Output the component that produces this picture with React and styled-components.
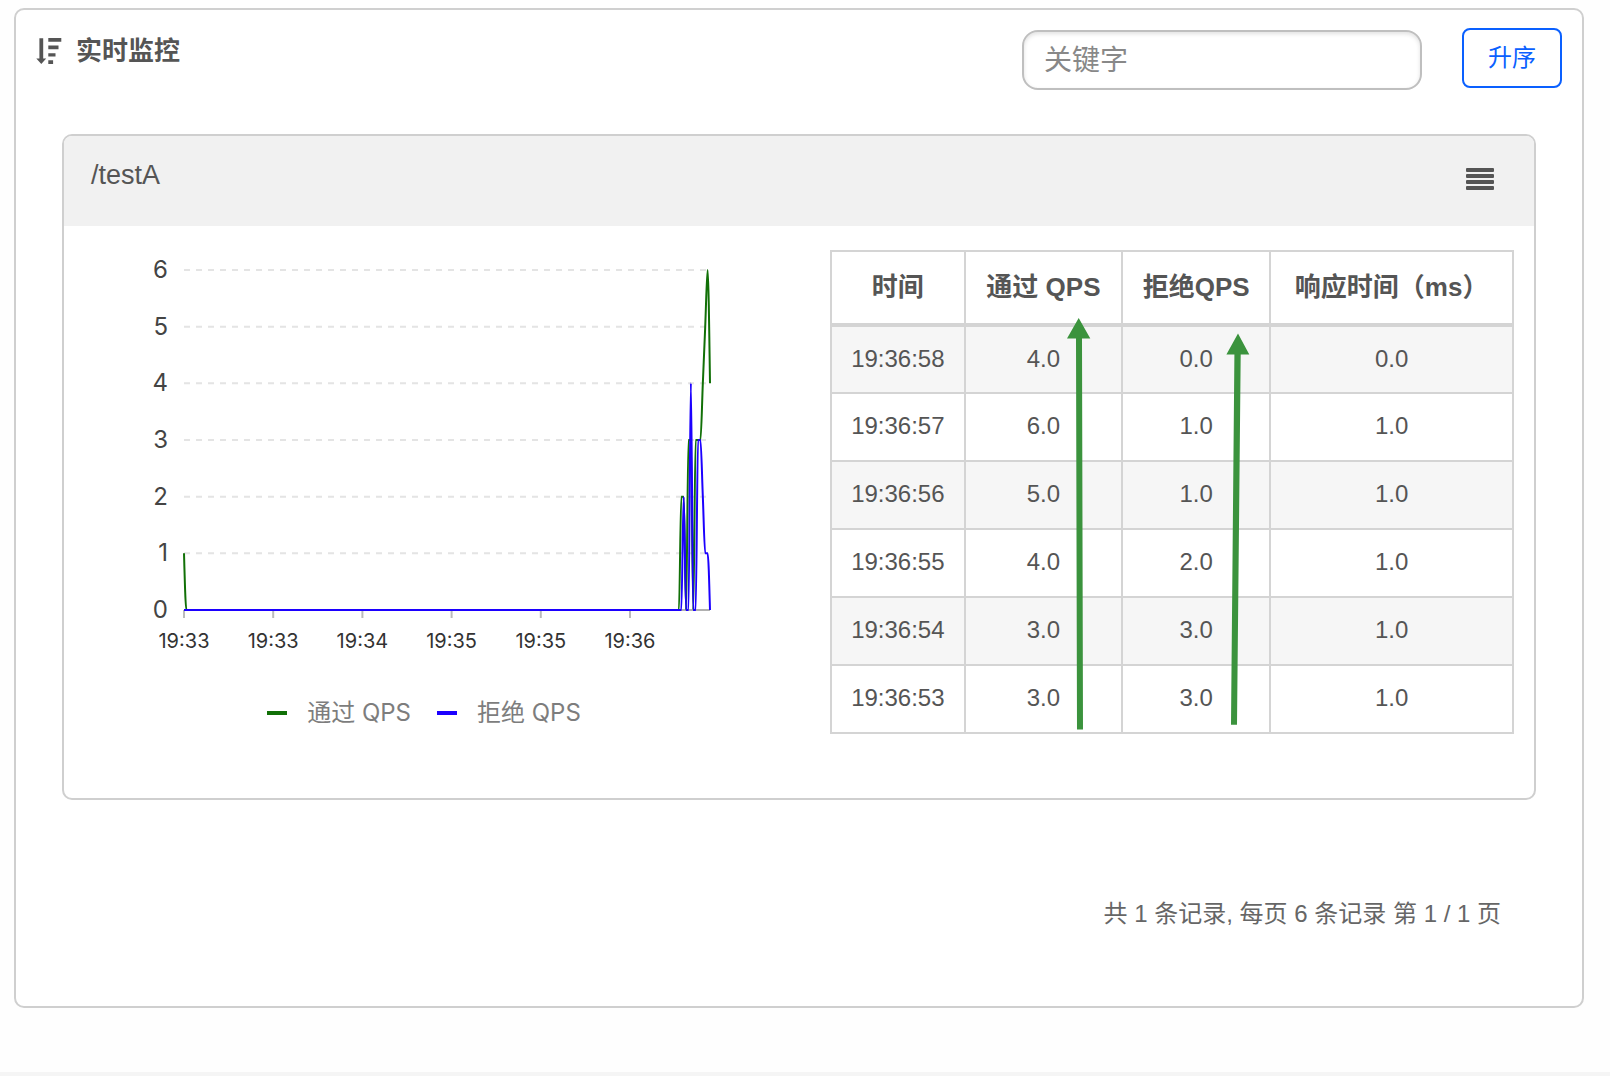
import React from 'react';
import styled, {createGlobalStyle} from 'styled-components';

const borderColor = '#cfcfcf';
const tableBorder = '#d4d4d4';
const textColor = '#555555';
const passColor = '#117007';
const blockColor = '#1c00ff';
const arrowColor = '#3b933d';

const GlobalStyle = createGlobalStyle`
    *{
        box-sizing: border-box;
    }

    body{
        margin: 0;
        background: #f5f5f5;
        color: ${textColor};
        font-family: "Liberation Sans", "Noto Sans CJK SC", sans-serif;
    }
`

const Page = styled('main')`
    padding: 8px 26px 64px 14px;
    background: #fefefe;
`

const Card = styled('section')`
    border: 2px solid ${borderColor};
    border-radius: 10px;
    background: #ffffff;
`

const CardHeader = styled('header')`
    display: flex;
    align-items: flex-start;
    gap: 40px;
    height: 124px;
    padding: 18px 20px 0;
`

const Title = styled('h1')`
    display: flex;
    align-items: center;
    flex: 1;
    gap: 14px;
    margin: 0;
    font-size: 26px;
    line-height: 46px;
    font-weight: 700;
`

const Search = styled('input')`
    width: 400px;
    height: 60px;
    margin-top: 2px;
    padding: 2px 20px 0;
    border: 2px solid #bfbfbf;
    border-radius: 16px;
    background: #ffffff;
    box-shadow: inset 0 2px 4px rgba(0, 0, 0, 0.12);
    color: ${textColor};
    font-family: inherit;
    font-size: 28px;

    &::placeholder{
        color: #888888;
        opacity: 1;
    }
`

const SortButton = styled('button')`
    width: 100px;
    height: 60px;
    padding: 0 0 5px;
    border: 2px solid #0a60ff;
    border-radius: 8px;
    background: #ffffff;
    color: #0a60ff;
    font-family: inherit;
    font-size: 24px;
    cursor: pointer;
`

const Panel = styled('article')`
    margin: 0 46px;
    border: 2px solid ${borderColor};
    border-radius: 10px;
    overflow: hidden;
`

const PanelHeader = styled('div')`
    display: flex;
    align-items: center;
    justify-content: space-between;
    height: 90px;
    padding: 0 40px 12px 27px;
    background: #f1f1f1;
`

const Resource = styled('h2')`
    margin: 0;
    font-size: 27px;
    font-weight: 400;
    line-height: 32px;
`

const MenuButton = styled('button')`
    display: flex;
    padding: 8px 0 0;
    border: 0;
    background: none;
    color: ${textColor};
    cursor: pointer;
`

const PanelBody = styled('div')`
    display: grid;
    grid-template-columns: 766fr 684fr;
    padding: 24px 20px 64px 0;
`

const ChartBox = styled('div')`
    display: flex;
    flex-direction: column;
    width: 720px;
    max-width: 100%;
    font-family: Inter, "Noto Sans CJK SC", sans-serif;

    svg{
        display: block;
        width: 100%;
    }
`

const Legend = styled('div')`
    display: flex;
    justify-content: center;
    gap: 26px;
    padding-top: 29px;
`

const LegendItem = styled('span')`
    display: flex;
    align-items: center;
    gap: 20px;
    color: #7d7d7d;
    font-size: 24px;
    line-height: 36px;

    &::before{
        content: '';
        width: 20px;
        height: 4px;
        background: ${props => props.$color};
    }
`

const TableBox = styled('div')`
    position: relative;
    align-self: start;
`

const Table = styled('table')`
    width: 100%;
    table-layout: fixed;
    border-collapse: collapse;
    text-align: center;

    th, td{
        padding: 0;
        border: 2px solid ${tableBorder};
    }

    th{
        height: 74px;
        padding-bottom: 6px;
        border-bottom-width: 4px;
        font-size: 26px;
        font-weight: 700;
        white-space: nowrap;
    }

    td{
        height: 68px;
        padding-bottom: 2px;
        font-size: 24px;
    }

    tbody tr:nth-child(odd){
        background: #f6f6f6;
    }
`

const Col = styled('col')`
    width: ${props => props.$width};
`

const Arrows = styled('svg')`
    position: absolute;
    inset: 0;
    width: 100%;
    height: 100%;
    pointer-events: none;
`

const Pager = styled('footer')`
    padding: 96px 81px 74px;
    color: #666666;
    font-size: 24px;
    line-height: 36px;
    text-align: right;
`

const rows = [
    {time: '19:36:58', pass: '4.0', block: '0.0', rt: '0.0'},
    {time: '19:36:57', pass: '6.0', block: '1.0', rt: '1.0'},
    {time: '19:36:56', pass: '5.0', block: '1.0', rt: '1.0'},
    {time: '19:36:55', pass: '4.0', block: '2.0', rt: '1.0'},
    {time: '19:36:54', pass: '3.0', block: '3.0', rt: '1.0'},
    {time: '19:36:53', pass: '3.0', block: '3.0', rt: '1.0'},
];

// one value per second, only the last seconds have traffic
const SAMPLES = 221;
const passTail = [0, 2, 2, 0, 3, 3, 0, 3, 3, 3, 4, 5, 6, 4];
const blockTail = [0, 0, 2, 0, 0, 4, 0, 0, 3, 3, 2, 1, 1, 0];
const timeLabels = ['19:33', '19:33', '19:34', '19:35', '19:35', '19:36'];

const plot = {left: 120, right: 646, top: 20, bottom: 360, max: 6};

function scaleY(value){
    return plot.bottom - value * (plot.bottom - plot.top) / plot.max;
}

function buildSeries(first, tail){
    const values = new Array(SAMPLES - tail.length).fill(0).concat(tail);
    values[0] = first;
    return values;
}

// monotone curve through the samples, so it never goes under zero
function linePath(values){
    const step = (plot.right - plot.left) / (SAMPLES - 1);
    const ys = values.map(scaleY);
    const delta = ys.slice(1).map((y, i) => y - ys[i]);
    const slopes = ys.map((y, i) => {
        if(i === 0 || i === ys.length - 1) return null;
        const a = delta[i - 1];
        const b = delta[i];
        return a * b <= 0 ? 0 : 2 * a * b / (a + b);
    });
    slopes[0] = (3 * delta[0] - slopes[1]) / 2;
    slopes[ys.length - 1] = (3 * delta[delta.length - 1] - slopes[ys.length - 2]) / 2;

    let d = `M${plot.left},${ys[0]}`;
    for(let i = 1; i < ys.length; i++){
        const x = plot.left + i * step;
        d += `C${x - step * 2 / 3},${ys[i - 1] + slopes[i - 1] / 3} ${x - step / 3},${ys[i] - slopes[i] / 3} ${x},${ys[i]}`;
    }
    return d;
}

function SortIcon(){
    return(
        <svg width="26" height="28" viewBox="0 0 26 28" fill="currentColor" aria-hidden="true">
            <path d="M3.4 1.2h3.8v20.4h3L5.3 27 .3 21.6h3.1z"/>
            <path d="M12.3 1h13v3.7h-13zM12.3 8.6h10.2v3.7H12.3zM12.3 16.2h7.2v3.2h-7.2zM12.3 23.2h4.8v3.7h-4.8z"/>
        </svg>
    )
}

function MenuIcon(){
    return(
        <svg width="28" height="22" viewBox="0 0 28 22" fill="currentColor" aria-hidden="true">
            {[0, 6, 12, 18].map(y => <rect key={y} y={y} width="28" height="4" rx="1"/>)}
        </svg>
    )
}

function QpsChart(){
    return(
        <ChartBox>
            <svg viewBox="0 0 720 416">
                {[1, 2, 3, 4, 5, 6].map(v => (
                    <line key={v} x1={plot.left} x2={plot.right} y1={scaleY(v)} y2={scaleY(v)}
                        stroke="#e4e4e4" strokeWidth="2" strokeDasharray="6 6"/>
                ))}
                <line x1={plot.left} x2={plot.right} y1={plot.bottom} y2={plot.bottom} stroke="#b0b0b0" strokeWidth="2"/>
                {[0, 1, 2, 3, 4, 5, 6].map(v => (
                    <text key={v} x="104" y={scaleY(v) + 8} textAnchor="end" fontSize="24" fill="#444444">{v}</text>
                ))}
                {timeLabels.map((label, i) => {
                    const x = plot.left + i * 89.2;
                    return(
                        <g key={i}>
                            <line x1={x} x2={x} y1={plot.bottom} y2={plot.bottom + 8} stroke="#bbbbbb" strokeWidth="2"/>
                            <text x={x} y="398" textAnchor="middle" fontSize="20" fill="#333333">{label}</text>
                        </g>
                    )
                })}
                <path d={linePath(buildSeries(1, passTail))} fill="none" stroke={passColor} strokeWidth="2"/>
                <path d={linePath(buildSeries(0, blockTail))} fill="none" stroke={blockColor} strokeWidth="2"/>
            </svg>
            <Legend>
                <LegendItem $color={passColor}>通过 QPS</LegendItem>
                <LegendItem $color={blockColor}>拒绝 QPS</LegendItem>
            </Legend>
        </ChartBox>
    )
}

function QpsTable(){
    return(
        <TableBox>
            <Table>
                <colgroup>
                    <Col $width="19.6%"/>
                    <Col $width="23.1%"/>
                    <Col $width="21.7%"/>
                    <Col $width="35.6%"/>
                </colgroup>
                <thead>
                    <tr>
                        <th>时间</th>
                        <th>通过 QPS</th>
                        <th>拒绝QPS</th>
                        <th>响应时间（ms）</th>
                    </tr>
                </thead>
                <tbody>
                    {rows.map(row => (
                        <tr key={row.time}>
                            <td>{row.time}</td>
                            <td>{row.pass}</td>
                            <td>{row.block}</td>
                            <td>{row.rt}</td>
                        </tr>
                    ))}
                </tbody>
            </Table>
            <Arrows viewBox="0 0 684 484" preserveAspectRatio="none" fill={arrowColor} aria-hidden="true">
                <path d="M248.7 68l11.6 20.6h-8.3l1 391h-6l-1-391h-9z"/>
                <path d="M408 83.6l11.3 20.8h-8.6L407 474.8h-6l3.4-370.4h-8z"/>
            </Arrows>
        </TableBox>
    )
}

function App(){
    return(
        <Page>
            <GlobalStyle/>
            <Card>
                <CardHeader>
                    <Title><SortIcon/>实时监控</Title>
                    <Search type="text" placeholder="关键字" aria-label="关键字"/>
                    <SortButton type="button">升序</SortButton>
                </CardHeader>
                <Panel>
                    <PanelHeader>
                        <Resource>/testA</Resource>
                        <MenuButton type="button" aria-label="菜单"><MenuIcon/></MenuButton>
                    </PanelHeader>
                    <PanelBody>
                        <QpsChart/>
                        <QpsTable/>
                    </PanelBody>
                </Panel>
                <Pager>共 1 条记录, 每页 6 条记录 第 1 / 1 页</Pager>
            </Card>
        </Page>
    )
}

export default App;
